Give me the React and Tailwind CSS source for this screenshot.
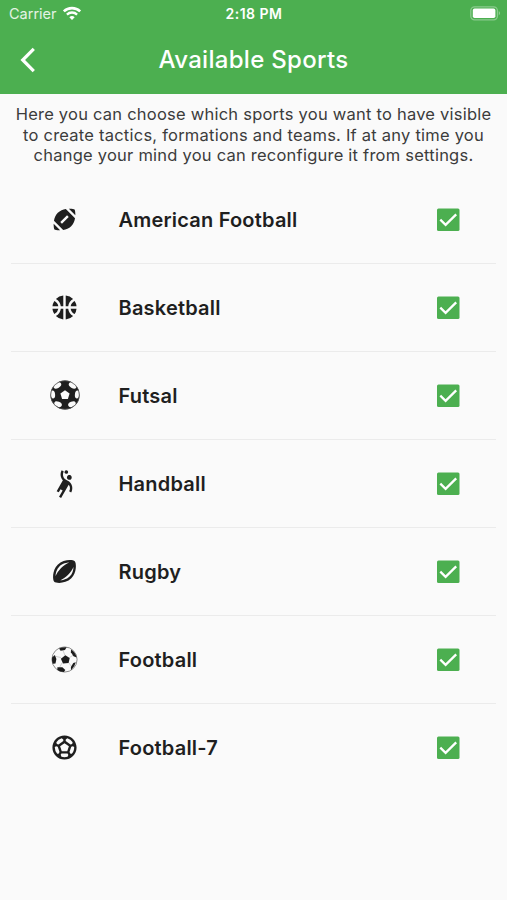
import React from "react";
import {
  MdSportsBasketball,
  MdSportsFootball,
  MdSportsHandball,
  MdSportsRugby,
  MdSportsSoccer,
} from "react-icons/md";

function FutsalIcon() {
  return (
    <svg viewBox="0 0 30 30" className="-mt-px h-[30px] w-[30px]">
      <circle cx="15" cy="15" r="14.6" fill="#1f1f1f" />
      <g fill="#fafafa">
        <path d="M15 10.2l4.6 3.4-1.7 5.4h-5.8l-1.7-5.4z" />
        <ellipse cx="7.4" cy="5.6" rx="4.2" ry="2.5" transform="rotate(-32 7.4 5.6)" />
        <ellipse cx="22.6" cy="5.6" rx="4.2" ry="2.5" transform="rotate(32 22.6 5.6)" />
        <ellipse cx="2.9" cy="14.4" rx="2.2" ry="4" transform="rotate(-6 2.9 14.4)" />
        <ellipse cx="27.1" cy="14.4" rx="2.2" ry="4" transform="rotate(6 27.1 14.4)" />
        <ellipse cx="8" cy="24.2" rx="4" ry="2.6" transform="rotate(22 8 24.2)" />
        <ellipse cx="22" cy="24.2" rx="4" ry="2.6" transform="rotate(-22 22 24.2)" />
      </g>
      <circle cx="15" cy="15" r="14.3" fill="none" stroke="#555" strokeWidth="0.7" />
    </svg>
  );
}

function FootballIcon() {
  return (
    <svg viewBox="0 0 27 27" className="-mt-px h-[27px] w-[27px]">
      <circle cx="13.5" cy="13.5" r="12.6" fill="#fafafa" stroke="#808080" strokeWidth="0.9" />
      <path
        d="M12 4.500l2 5M18.500 11.500l4-2.500M17.500 16.500l3.500 4.500M11 17l-2.500 4.500M10 11.500l-5-1"
        stroke="#bbb"
        strokeWidth="0.7"
      />
      <g fill="#1c1c1c">
        <path d="M14.300 9.300l4.400 2.600-1.100 5-5.600.5-2.100-4.600z" />
        <path d="M8 2.500Q11.500.9 15.600 1.200l-1.600 2.900-4.400.6z" />
        <path d="M20 3.600Q24.600 6.600 25.600 11.400l-3.100-1.200-2.600-3.900z" />
        <path d="M1.100 11.400l2.800-2.300 1.500 4-.9 4.400-2.700.3Q.7 14.500 1.100 11.400z" />
        <path d="M6.400 21.200l5 .1 2.900 2.800-1.300 2Q9.200 26.200 6.400 24.100z" />
        <path d="M19.900 21l2.400-4 2.500-.7Q23.800 20.700 20 24.200z" />
      </g>
    </svg>
  );
}

function WifiIcon() {
  return (
    <svg viewBox="0 0 20 15" className="h-[15px] w-5" fill="none" stroke="#fff">
      <path d="M1.8 5.4a11.8 11.8 0 0 1 16.4 0" strokeWidth="2.6" />
      <path d="M4.9 8.6a7.3 7.3 0 0 1 10.2 0" strokeWidth="2.3" />
      <path d="M10 14l-2.7-2.8a3.9 3.9 0 0 1 5.4 0z" fill="#fff" stroke="none" />
    </svg>
  );
}

function BatteryIcon() {
  return (
    <svg viewBox="0 0 31 15" className="-mt-px h-[15px] w-[31px]">
      <rect
        x="0.8"
        y="0.8"
        width="26.6"
        height="13"
        rx="3.8"
        fill="none"
        stroke="#fff"
        strokeOpacity="0.35"
        strokeWidth="1.3"
      />
      <rect x="2.8" y="2.6" width="22.6" height="9.4" rx="1.8" fill="#fff" />
      <path d="M28.8 5q2.2 2.2 0 4.4z" fill="#fff" fillOpacity="0.45" />
    </svg>
  );
}

function CheckBox() {
  return (
    <svg viewBox="0 0 24 24" className="h-6 w-6">
      <rect x="1" y="0.5" width="22.5" height="22.5" rx="1.5" fill="#4caf50" />
      <path d="M4.3 11.7l5.3 5.1L20.2 6.4" fill="none" stroke="#fff" strokeWidth="2.3" />
    </svg>
  );
}

const sports = [
  { name: "American Football", icon: <MdSportsFootball size={29} /> },
  { name: "Basketball", icon: <MdSportsBasketball size={29} /> },
  { name: "Futsal", icon: <FutsalIcon /> },
  { name: "Handball", icon: <MdSportsHandball size={29} /> },
  { name: "Rugby", icon: <MdSportsRugby size={29} /> },
  { name: "Football", icon: <FootballIcon /> },
  { name: "Football-7", icon: <MdSportsSoccer size={29} /> },
];

export default function App() {
  return (
    <div className="h-[900px] w-full bg-[#fafafa] font-['Inter',sans-serif] text-[#1f1f1f]">
      <header className="h-[94px] bg-[#4caf50] text-white">
        <div className="grid h-[27px] grid-cols-3 items-center pl-[9px] pr-[6px]">
          <div className="flex items-center gap-[5px] text-[14.5px] text-white/85">
            <span>Carrier</span>
            <WifiIcon />
          </div>
          <span className="-ml-[2px] text-center text-[14px] font-semibold tracking-[0.5px]">
            2:18 PM
          </span>
          <div className="flex justify-end">
            <BatteryIcon />
          </div>
        </div>
        <div className="grid h-[66px] grid-cols-[60px_1fr_60px] items-center">
          <svg viewBox="0 0 18 26" className="ml-[19px] h-[26px] w-[18px]">
            <path
              d="M14.8 1.8L3.7 13l11.1 11.2"
              fill="none"
              stroke="#fff"
              strokeWidth="3.2"
            />
          </svg>
          <h1 className="text-center text-[24px] font-medium tracking-[0.3px]">
            Available Sports
          </h1>
        </div>
      </header>

      <p className="h-[82px] pt-[10px] text-center text-[16.5px] leading-[20.7px] tracking-[0.23px] text-[#3c3c3c]">
        Here you can choose which sports you want to have visible
        <br />
        to create tactics, formations and teams. If at any time you
        <br />
        change your mind you can reconfigure it from settings.
      </p>

      <ul className="px-[11px]">
        {sports.map((sport) => (
          <li
            key={sport.name}
            className="flex h-[88px] items-center border-b border-[#ebebeb] pr-[36px] last:border-transparent"
          >
            <div className="flex w-[107px] justify-center">{sport.icon}</div>
            <span className="flex-1 pl-[0.5px] text-[20px] font-semibold tracking-[0.2px]">
              {sport.name}
            </span>
            <CheckBox />
          </li>
        ))}
      </ul>
    </div>
  );
}
